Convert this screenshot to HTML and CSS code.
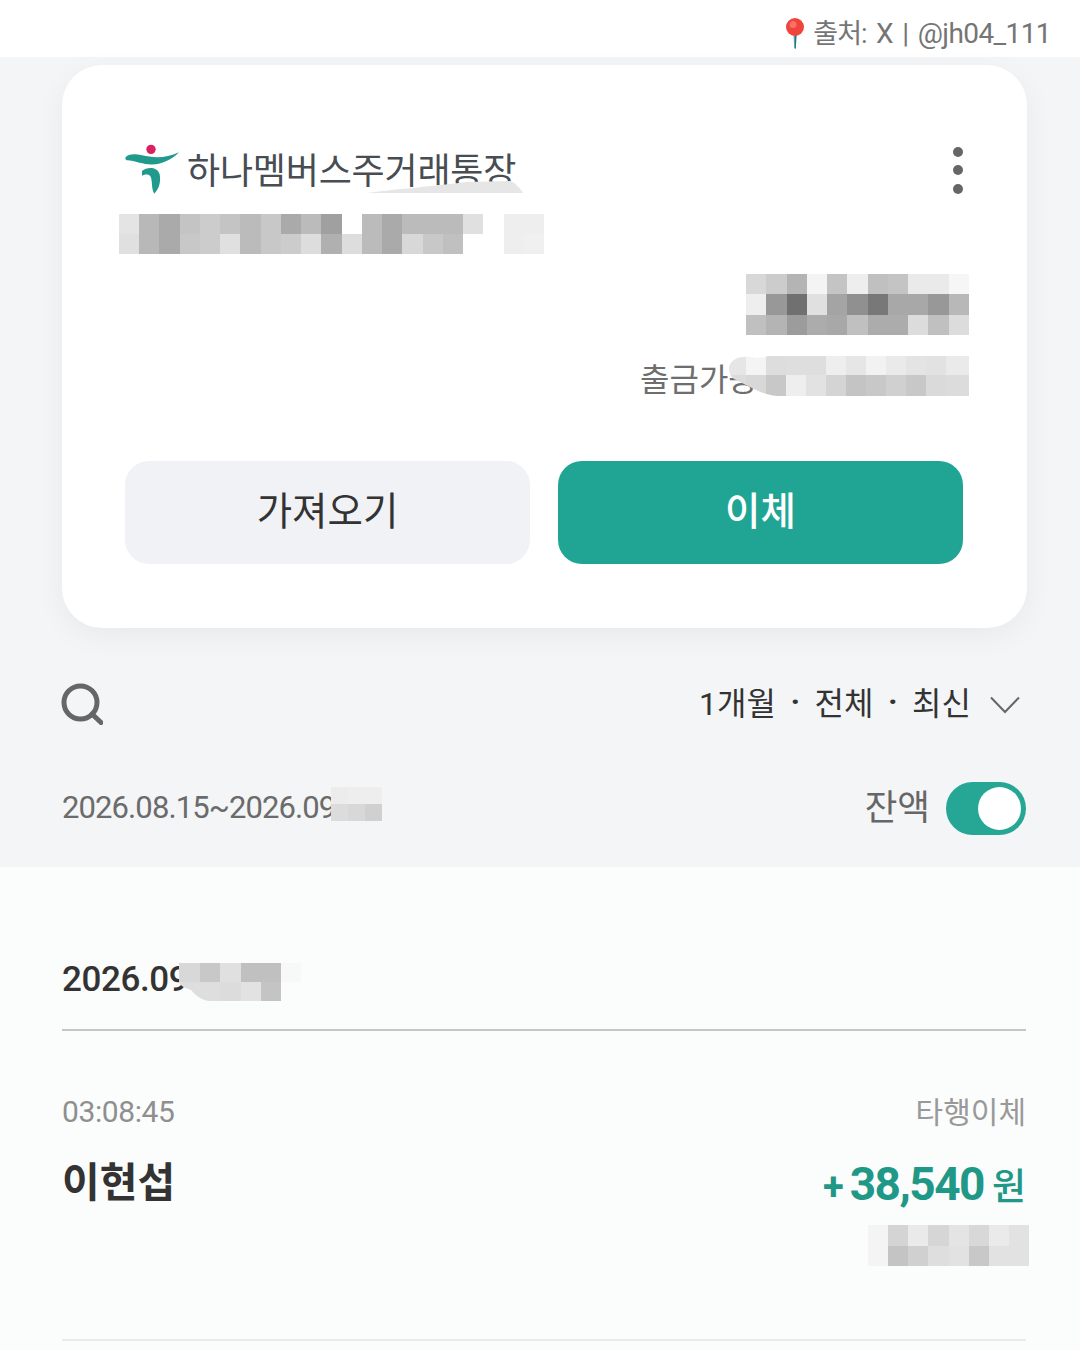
FILE: index.html
```html
<!DOCTYPE html>
<html lang="ko">
<head>
<title>하나멤버스주거래통장</title>
<meta charset="utf-8"/>
<link rel="stylesheet" href="styles.css">
</head>
<body>

<div class="source">
  <svg class="pin" viewBox="0 0 20 32">
    <path d="M8.500 17H11.500L10.800 31.500H9.200Z" fill="#5f9fb5"/>
    <path d="M10 17H11.500L10.800 31.500H10Z" fill="#2f6f88"/>
    <circle cx="10" cy="10" r="9" fill="#f0433a"/>
    <circle cx="8" cy="7.500" r="3.500" fill="#f8706a"/>
  </svg>
  <span><span class="source-ko">출처:</span> X | @jh04_111</span>
</div>

<div class="top">
  <div class="card">
    <div class="card-head">
      <div class="bank">
        <svg class="logo" viewBox="24 24 172 156">
          <circle cx="107" cy="43" r="14" fill="#d7235f"/>
          <path d="M30 68C38 56 60 56 80 61C110 68 150 72 191 52C170 74 135 92 100 88C75 86 50 76 38 76C32 76 29 72 30 68Z" fill="#1f9a8c"/>
          <path d="M80 108C95 96 125 94 133 118C138 145 128 165 117 176C106 158 113 132 104 122C98 116 88 118 80 122Z" fill="#1f9a8c"/>
        </svg>
        <span class="bank-name">하나멤버스주거래통장</span>
      </div>
      <div class="kebab"><i></i><i></i><i></i></div>
      <svg class="smear" width="156" height="13" viewBox="0 0 156 13">
        <path d="M0 12C30 8 60 6 100 1L144 0C148 2 153 7 156 12Z" fill="#e6e6e6"/>
      </svg>
    </div>

    <svg class="mosaic m-account" viewBox="0 0 21 2" preserveAspectRatio="none">
      <rect x="0" y="0" fill="#e4e4e4"/><rect x="1" y="0" fill="#b8b8b8"/><rect x="2" y="0" fill="#aaa"/><rect x="3" y="0" fill="#c4c4c4"/><rect x="4" y="0" fill="#ccc"/><rect x="5" y="0" fill="#c4c4c4"/><rect x="6" y="0" fill="#bbb"/><rect x="7" y="0" fill="#c8c8c8"/><rect x="8" y="0" fill="#aaa"/><rect x="9" y="0" fill="#bbb"/><rect x="10" y="0" fill="#a0a0a0"/><rect x="12" y="0" fill="#bbb"/><rect x="13" y="0" fill="#aaa"/><rect x="14" y="0" fill="#bbb"/><rect x="15" y="0" fill="#bbb"/><rect x="16" y="0" fill="#bbb"/><rect x="17" y="0" fill="#e0e0e0"/><rect x="19" y="0" fill="#eee"/><rect x="20" y="0" fill="#eee"/>
      <rect x="0" y="1" fill="#e0e0e0"/><rect x="1" y="1" fill="#b8b8b8"/><rect x="2" y="1" fill="#aaa"/><rect x="3" y="1" fill="#c8c8c8"/><rect x="4" y="1" fill="#ccc"/><rect x="5" y="1" fill="#e0e0e0"/><rect x="6" y="1" fill="#bbb"/><rect x="7" y="1" fill="#c8c8c8"/><rect x="8" y="1" fill="#ccc"/><rect x="9" y="1" fill="#ddd"/><rect x="10" y="1" fill="#b0b0b0"/><rect x="11" y="1" fill="#ddd"/><rect x="12" y="1" fill="#bbb"/><rect x="13" y="1" fill="#aaa"/><rect x="14" y="1" fill="#d8d8d8"/><rect x="15" y="1" fill="#c8c8c8"/><rect x="16" y="1" fill="#c0c0c0"/><rect x="19" y="1" fill="#eee"/><rect x="20" y="1" fill="#f0f0f0"/>
    </svg>

    <svg class="mosaic m-balance" viewBox="0 0 11 3" preserveAspectRatio="none">
      <rect x="0" y="0" fill="#d8d8d8"/><rect x="1" y="0" fill="#ccc"/><rect x="2" y="0" fill="#b4b4b4"/><rect x="3" y="0" fill="#f4f4f4"/><rect x="4" y="0" fill="#c4c4c4"/><rect x="5" y="0" fill="#eee"/><rect x="6" y="0" fill="#c0c0c0"/><rect x="7" y="0" fill="#c4c4c4"/><rect x="8" y="0" fill="#eaeaea"/><rect x="9" y="0" fill="#eaeaea"/><rect x="10" y="0" fill="#f6f6f6"/>
      <rect x="0" y="1" fill="#eee"/><rect x="1" y="1" fill="#989898"/><rect x="2" y="1" fill="#707070"/><rect x="3" y="1" fill="#e0e0e0"/><rect x="4" y="1" fill="#a4a4a4"/><rect x="5" y="1" fill="#909090"/><rect x="6" y="1" fill="#787878"/><rect x="7" y="1" fill="#a8a8a8"/><rect x="8" y="1" fill="#a8a8a8"/><rect x="9" y="1" fill="#989898"/><rect x="10" y="1" fill="#b8b8b8"/>
      <rect x="0" y="2" fill="#c0c0c0"/><rect x="1" y="2" fill="#b4b4b4"/><rect x="2" y="2" fill="#9c9c9c"/><rect x="3" y="2" fill="#acacac"/><rect x="4" y="2" fill="#a8a8a8"/><rect x="5" y="2" fill="#c0c0c0"/><rect x="6" y="2" fill="#acacac"/><rect x="7" y="2" fill="#acacac"/><rect x="8" y="2" fill="#dcdcdc"/><rect x="9" y="2" fill="#c0c0c0"/><rect x="10" y="2" fill="#dcdcdc"/>
    </svg>

    <div class="limit">
      <span class="limit-label">출금가능</span>
      <svg class="m-limit" width="242" height="41" viewBox="0 0 242 41">
        <defs><clipPath id="limit-clip"><path d="M2 12C5 2 16 0 30 3L42 1H242V41H50C35 40 20 30 7 24C3 21 2 17 2 12Z"/></clipPath></defs>
        <g clip-path="url(#limit-clip)" shape-rendering="crispEdges">
          <rect x="0" y="0" width="19" height="20" fill="#e6e6e6"/><rect x="19" y="0" width="20" height="20" fill="#f4f4f4"/><rect x="39" y="0" width="20" height="20" fill="#ddd"/><rect x="59" y="0" width="40" height="20" fill="#dedede"/><rect x="99" y="0" width="20" height="20" fill="#eee"/><rect x="119" y="0" width="20" height="20" fill="#e6e6e6"/><rect x="139" y="0" width="20" height="20" fill="#f2f2f2"/><rect x="159" y="0" width="20" height="20" fill="#eaeaea"/><rect x="179" y="0" width="20" height="20" fill="#e4e4e4"/><rect x="199" y="0" width="20" height="20" fill="#e2e2e2"/><rect x="219" y="0" width="23" height="20" fill="#eaeaea"/>
          <rect x="0" y="20" width="19" height="21" fill="#dcdcdc"/><rect x="19" y="20" width="20" height="21" fill="#d8d8d8"/><rect x="39" y="20" width="20" height="21" fill="#c8c8c8"/><rect x="59" y="20" width="20" height="21" fill="#eee"/><rect x="79" y="20" width="20" height="21" fill="#e2e2e2"/><rect x="99" y="20" width="20" height="21" fill="#d4d4d4"/><rect x="119" y="20" width="20" height="21" fill="#c4c4c4"/><rect x="139" y="20" width="20" height="21" fill="#c8c8c8"/><rect x="159" y="20" width="20" height="21" fill="#d0d0d0"/><rect x="179" y="20" width="20" height="21" fill="#c8c8c8"/><rect x="199" y="20" width="20" height="21" fill="#dadada"/><rect x="219" y="20" width="23" height="21" fill="#dcdcdc"/>
        </g>
      </svg>
    </div>

    <div class="actions">
      <div class="btn btn-fetch">가져오기</div>
      <div class="btn btn-send">이체</div>
    </div>
  </div>

  <div class="filter">
    <svg class="search" viewBox="0 0 42 42">
      <circle cx="19.500" cy="19.500" r="16.500" fill="none" stroke="#666" stroke-width="5"/>
      <path d="M31 31L40 39.500" fill="none" stroke="#666" stroke-width="5" stroke-linecap="round"/>
    </svg>
    <div class="filter-opts">
      <span>1개월</span><span class="dot">·</span><span>전체</span><span class="dot">·</span><span>최신</span>
      <svg class="chevron" viewBox="0 0 30 18"><path d="M1 1.500L15 16L29 1.500" fill="none" stroke="#666" stroke-width="2"/></svg>
    </div>
  </div>

  <div class="range-row">
    <div class="range">2026.08.15~2026.09
      <svg class="mosaic m-range" viewBox="0 0 3 2" preserveAspectRatio="none">
        <rect x="0" y="0" fill="#ececec"/><rect x="1" y="0" fill="#eee"/><rect x="2" y="0" fill="#eee"/>
        <rect x="0" y="1" fill="#dcdcdc"/><rect x="1" y="1" fill="#d8d8d8"/><rect x="2" y="1" fill="#d0d0d0"/>
      </svg>
    </div>
    <div class="balance-toggle">
      <span>잔액</span>
      <div class="toggle"><i></i></div>
    </div>
  </div>
</div>

<div class="list">
  <div class="day">2026.09
    <svg class="m-day" width="122" height="40" viewBox="0 0 122 40">
      <defs><clipPath id="day-clip"><path d="M0 0H122V19H102V38H30C22 37 16 32 12 27C6 25 0 22 0 19Z"/></clipPath></defs>
      <g clip-path="url(#day-clip)" shape-rendering="crispEdges">
        <rect x="0" y="0" width="21" height="19" fill="#d8d8d8"/><rect x="21" y="0" width="20" height="19" fill="#c8c8c8"/><rect x="41" y="0" width="21" height="19" fill="#e0e0e0"/><rect x="62" y="0" width="40" height="19" fill="#c0c0c0"/><rect x="102" y="0" width="20" height="19" fill="#f8f8f8"/>
        <rect x="0" y="19" width="41" height="21" fill="#dedede"/><rect x="41" y="19" width="21" height="21" fill="#dcdcdc"/><rect x="62" y="19" width="20" height="21" fill="#e2e2e2"/><rect x="82" y="19" width="20" height="21" fill="#c4c4c4"/>
      </g>
    </svg>
  </div>

  <div class="tx">
    <div class="tx-row">
      <span class="tx-time">03:08:45</span>
      <span class="tx-type">타행이체</span>
    </div>
    <div class="tx-row tx-main">
      <span class="tx-name">이현섭</span>
      <span class="tx-amount"><span class="plus">+</span><b>38,540</b><span class="won">원</span></span>
    </div>
    <svg class="mosaic m-after" viewBox="0 0 8 2" preserveAspectRatio="none">
      <rect x="0" y="0" fill="#f4f4f4"/><rect x="1" y="0" fill="#d4d4d4"/><rect x="2" y="0" fill="#eaeaea"/><rect x="3" y="0" fill="#d6d6d6"/><rect x="4" y="0" fill="#e4e4e4"/><rect x="5" y="0" fill="#d8d8d8"/><rect x="6" y="0" fill="#eaeaea"/><rect x="7" y="0" fill="#e2e2e2"/>
      <rect x="0" y="1" fill="#f4f4f4"/><rect x="1" y="1" fill="#c4c4c4"/><rect x="2" y="1" fill="#d0d0d0"/><rect x="3" y="1" fill="#dedede"/><rect x="4" y="1" fill="#e2e2e2"/><rect x="5" y="1" fill="#c8c8c8"/><rect x="6" y="1" fill="#e2e2e2"/><rect x="7" y="1" fill="#e2e2e2"/>
    </svg>
  </div>
</div>

</body>
</html>
```

FILE: styles.css
```css
* { box-sizing:border-box; }
html, body { margin:0; padding:0; }
body {
  width:1080px;
  height:1350px;
  overflow:hidden;
  background:#fbfcfc;
  font-family:Roboto, "Noto Sans CJK KR", sans-serif;
  color:#333;
}

/* source line */
.source {
  height:57px;
  background:#fff;
  display:flex;
  justify-content:flex-end;
  align-items:center;
  gap:8px;
  padding:6px 29px 0 0;
  font-size:28px;
  color:#757575;
  letter-spacing:-0.6px;
  word-spacing:3px;
}
.source-ko { font-size:27px; letter-spacing:-1px; }
.pin { width:20px; height:32px; margin-top:3px; }

/* grey top part */
.top {
  background:#f4f5f7;
  height:810px;
  padding:8px 54px 0 62px;
}

.card {
  height:563px;
  margin-right:-1px;
  background:#fff;
  border-radius:40px;
  padding:80px 64px 64px 63px;
  box-shadow:0 8px 30px rgba(0,0,0,.05);
}
.card-head {
  position:relative;
  height:50px;
  display:flex;
  justify-content:space-between;
  align-items:center;
}
.bank { display:flex; align-items:center; margin-left:-2px; }
.logo { width:58px; height:52px; margin-bottom:2px; }
.bank-name { margin-left:6px; padding-top:4px; font-size:36px; letter-spacing:-0.200px; line-height:50px; color:#484d52; }
.kebab { display:flex; flex-direction:column; gap:8.500px; }
.kebab i { display:block; width:10px; height:10px; border-radius:50%; background:#666; }
.smear { position:absolute; left:242px; top:36px; }

.mosaic { display:block; shape-rendering:crispEdges; filter:blur(.5px); }
.mosaic rect { width:1px; height:1px; }
.m-account { width:425px; height:40px; margin:19px 0 0 -6px; }
.m-balance { width:223px; height:61px; margin:20px -6px 0 auto; }

.limit {
  position:relative;
  height:41px;
  margin:20px -6px 0 0;
  display:flex;
  justify-content:flex-end;
}
.limit-label {
  width:329px;
  padding-top:5px;
  font-size:32px;
  line-height:41px;
  color:#6e6e6e;
}
.m-limit { position:absolute; right:0; top:0; filter:blur(.5px); }

.actions { display:flex; gap:28px; margin-top:65px; }
.btn {
  width:405px;
  height:103px;
  border-radius:24px;
  padding-bottom:10px;
  display:flex;
  align-items:center;
  justify-content:center;
  font-size:38.500px;
}
.btn-fetch { background:#f1f2f6; color:#333; }
.btn-send { background:#20a595; color:#fff; font-weight:500; }

/* filter row */
.filter {
  display:flex;
  justify-content:space-between;
  align-items:center;
  height:42px;
  margin-top:55px;
}
.search { width:42px; height:42px; margin-left:-1px; }
.filter-opts {
  display:flex;
  align-items:center;
  padding-bottom:6px;
  font-size:32px;
  color:#333;
  margin-right:6px;
}
.dot { margin:0 14.500px; font-weight:700; }
.chevron { width:30px; height:18px; margin-left:19px; margin-top:8px; }

.range-row {
  display:flex;
  justify-content:space-between;
  align-items:center;
  height:53px;
  margin-top:57px;
}
.range {
  position:relative;
  padding-bottom:2px;
  font-size:31px;
  letter-spacing:-0.900px;
  color:#6b6b6b;
}
.m-range { position:absolute; left:269px; top:-2px; width:51px; height:34px; }
.balance-toggle { display:flex; align-items:center; gap:16px; font-size:35.500px; color:#666; }
.balance-toggle span { padding-bottom:8px; }
.toggle {
  width:80px;
  height:53px;
  border-radius:27px;
  background:#26a796;
  display:flex;
  align-items:center;
  justify-content:flex-end;
  padding-right:5px;
}
.toggle i { display:block; width:43px; height:43px; border-radius:50%; background:#fff; }

/* transaction list */
.list { padding:90px 54px 0 62px; }
.day {
  position:relative;
  height:74px;
  padding-top:2px;
  line-height:42px;
  border-bottom:2px solid #c4c6c8;
  font-size:35px;
  font-weight:500;
  letter-spacing:-0.400px;
  color:#333;
}
.m-day { position:absolute; left:117px; top:6px; filter:blur(.5px); }

.tx {
  height:310px;
  padding-top:64px;
  border-bottom:2px solid #eaeaea;
}
.tx-row {
  display:flex;
  justify-content:space-between;
  align-items:center;
  height:32px;
}
.tx-time { font-size:30px; letter-spacing:-0.400px; color:#8f8f8f; }
.tx-type { padding-bottom:2px; font-size:30px; color:#999; }
.tx-main { height:50px; margin-top:32px; }
.tx-name { padding-bottom:10px; font-size:41px; font-weight:700; color:#333; }
.tx-amount { display:flex; align-items:baseline; color:#1f9888; }
.tx-amount b { font-size:46px; font-weight:700; letter-spacing:-1.500px; }
.plus { font-size:38px; font-weight:700; margin-right:6px; }
.won { font-size:37px; font-weight:500; margin-left:8px; }
.m-after { width:161px; height:41px; margin:16px -3px 0 auto; }
```
